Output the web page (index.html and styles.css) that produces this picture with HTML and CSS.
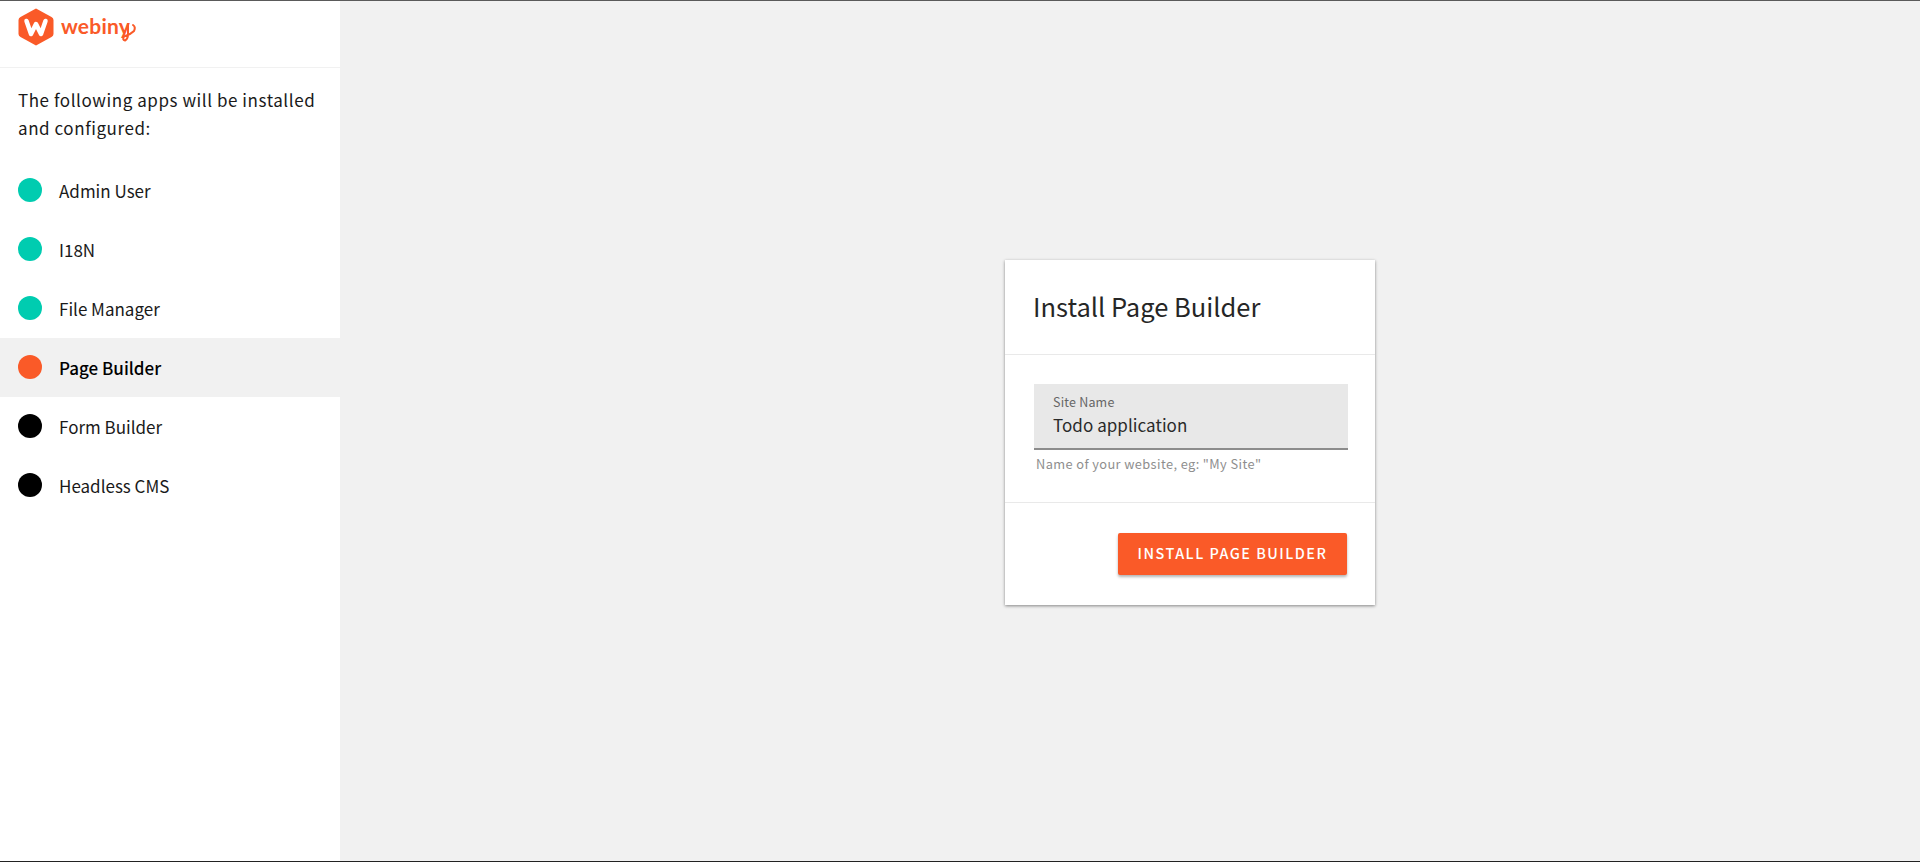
FILE: index.html
```html
<!DOCTYPE html>
<html lang="en">
<head>
<meta charset="utf-8">
<title>Install Page Builder</title>
<link rel="stylesheet" href="styles.css">
</head>
<body>
<div class="app">
  <aside class="sidebar">
    <header class="brand">
      <svg class="brand-mark" viewBox="0 0 36 38" width="36" height="38">
        <path class="hex" d="M18 0.500 L33.500 9 Q35.500 10.200 35.500 12 V26 Q35.500 27.800 33.500 29 L18 37.500 L2.500 29 Q0.500 27.800 0.500 26 V12 Q0.500 10.200 2.500 9 Z"/>
        <path class="w" d="M8.500 13 L13 26 L18 16 L23 26 L27.500 13"/>
      </svg>
      <span class="wordmark">webiny<svg class="tail" viewBox="0 0 16 22" width="16" height="22"><path d="M5 1 V11 Q5 16 2 17.500 Q-1 17 1 13.500 Q7 12 11 8 Q13 4 10 2"/></svg></span>
    </header>
    <p class="intro">The following apps will be installed and configured:</p>
    <ul class="steps">
      <li class="step"><span class="dot done"></span>Admin User</li>
      <li class="step"><span class="dot done"></span>I18N</li>
      <li class="step"><span class="dot done"></span>File Manager</li>
      <li class="step active"><span class="dot current"></span>Page Builder</li>
      <li class="step"><span class="dot"></span>Form Builder</li>
      <li class="step"><span class="dot"></span>Headless CMS</li>
    </ul>
  </aside>
  <main class="main">
    <section class="card">
      <h1 class="card-title">Install Page Builder</h1>
      <div class="card-body">
        <div class="field">
          <span class="field-label">Site Name</span>
          <span class="field-value">Todo application</span>
        </div>
        <p class="helper">Name of your website, eg: "My Site"</p>
      </div>
      <div class="card-actions">
        <button class="primary" type="button">Install Page Builder</button>
      </div>
    </section>
  </main>
</div>
</body>
</html>
```
FILE: styles.css
```css
* { box-sizing: border-box; }
html, body { margin: 0; height: 100%; }
body {
  font-family: "Noto Sans CJK SC", "Noto Sans", sans-serif;
  color: #1a1a1a;
  background: #f1f1f1;
  overflow: hidden;
}
.app {
  display: flex;
  height: 862px;
  border-top: 1px solid #5a5a5a;
  border-bottom: 1px solid #222;
}
.sidebar {
  width: 340px;
  flex: none;
  background: #fff;
}
.brand {
  height: 67px;
  border-bottom: 1px solid #f1f1f1;
  display: flex;
  align-items: flex-start;
  gap: 7px;
  padding: 7px 0 0 18px;
}
.brand-mark { display: block; }
.hex { fill: #fa5a28; }
.w { fill: none; stroke: #fff; stroke-width: 4.500; stroke-linejoin: round; stroke-linecap: round; }
.wordmark {
  position: relative;
  font-family: "Lato", sans-serif;
  font-weight: 700;
  font-size: 21px;
  line-height: 24px;
  margin-top: 6px;
  color: #fa5a28;
  letter-spacing: 0.2px;
}
.tail {
  position: absolute;
  right: -9px;
  top: 9px;
  overflow: visible;
  fill: none;
  stroke: #fa5a28;
  stroke-width: 2;
  stroke-linecap: round;
}
.intro {
  margin: 0;
  padding: 18px 10px 0 18px;
  font-size: 17px;
  line-height: 28px;
  letter-spacing: 0.56px;
  color: #1a1a1a;
}
.steps {
  list-style: none;
  margin: 0;
  padding: 18.500px 0 0;
}
.step {
  display: flex;
  align-items: center;
  height: 59px;
  padding-left: 18px;
  font-size: 17px;
}
.step.active {
  background: #f1f1f1;
  font-weight: 500;
  color: #000;
}
.dot {
  width: 24px;
  height: 24px;
  border-radius: 50%;
  background: #000;
  margin-right: 17px;
  flex: none;
}
.dot.done { background: #00ccb0; }
.dot.current { background: #fa5a28; }
.main {
  flex: 1;
  display: flex;
  justify-content: center;
  padding: 259px 0 0 120px;
}
.card {
  width: 370px;
  height: 345px;
  background: #fff;
  box-shadow: 0 1px 3px rgba(0,0,0,.45);
  display: flex;
  flex-direction: column;
}
.card-title {
  margin: 0;
  height: 95px;
  padding: 26px 28px 0;
  border-bottom: 1px solid #e9e9e9;
  font-size: 25.500px;
  line-height: 40px;
  font-weight: 400;
  color: #262626;
}
.card-body {
  height: 148px;
  padding: 29px 27px 0 29px;
  border-bottom: 1px solid #e9e9e9;
}
.field {
  height: 66px;
  background: #e8e8e8;
  border-bottom: 2px solid #8c8c8c;
  padding: 9px 19px 0;
  display: flex;
  flex-direction: column;
}
.field-label {
  font-size: 12.500px;
  line-height: 18px;
  color: #666;
  letter-spacing: 0.2px;
}
.field-value {
  font-size: 17px;
  line-height: 28px;
  letter-spacing: 0.05px;
  color: #2a2a2a;
}
.helper {
  margin: 4px 0 0 2px;
  font-size: 12.800px;
  line-height: 20px;
  color: #8e8e8e;
  letter-spacing: 0.4px;
}
.card-actions {
  display: flex;
  justify-content: flex-end;
  padding: 30px 28px 0 0;
}
.primary {
  height: 42px;
  width: 229px;
  border: 0;
  border-radius: 2px;
  background: #fa5a28;
  color: #fff;
  font-family: inherit;
  font-size: 14.400px;
  font-weight: 500;
  letter-spacing: 1.500px;
  text-transform: uppercase;
  padding-bottom: 4px;
  box-shadow: 0 2px 3px rgba(0,0,0,.3);
}
```
